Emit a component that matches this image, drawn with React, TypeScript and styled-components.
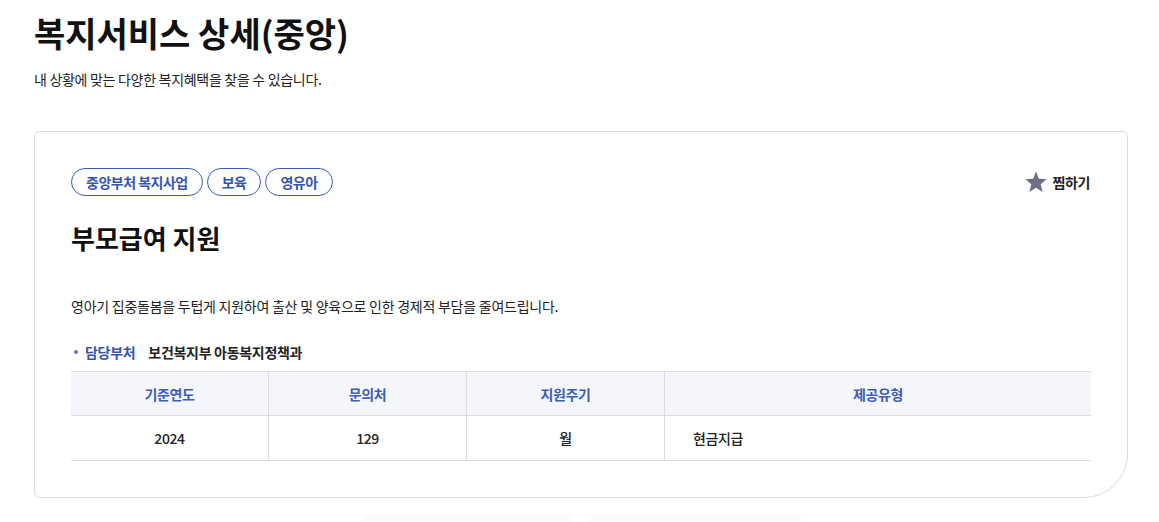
import React from "react";
import styled, { createGlobalStyle } from "styled-components";

const GlobalStyle = createGlobalStyle`
  html, body { margin: 0; padding: 0; background: #fff; }
  body { font-family: "Noto Sans CJK KR", "Noto Sans", sans-serif; color: #111; }
  * { box-sizing: border-box; }
`;

const Page = styled.div`
  padding: 12px 32px 0 34px;
  width: 1159px;
  height: 522px;
  overflow: hidden;
`;

const PageTitle = styled.h1`
  margin: 0;
  font-size: 34px;
  line-height: 42px;
  font-weight: 700;
  letter-spacing: 0;
  color: #111;
`;

const PageDesc = styled.p`
  margin: 15px 0 0;
  font-size: 14px;
  line-height: 20px;
  letter-spacing: -0.3px;
  color: #222;
`;

const Card = styled.section`
  margin-top: 42px;
  width: 1094px;
  border: 1px solid #dcdcdc;
  border-radius: 6px 6px 44px 6px;
  padding: 36px 36px 36px 36px;
`;

const TopRow = styled.div`
  display: flex;
  align-items: center;
  justify-content: space-between;
`;

const Tags = styled.div`
  display: flex;
  gap: 4px;
`;

const Tag = styled.span`
  display: inline-flex;
  align-items: center;
  height: 28px;
  padding: 0 14px;
  border: 1px solid #3d5db8;
  border-radius: 14px;
  font-size: 14px;
  font-weight: 700;
  letter-spacing: -0.5px;
  color: #3656b0;
`;

const Fav = styled.button`
  display: inline-flex;
  align-items: center;
  gap: 5px;
  border: 0;
  background: none;
  padding: 0;
  margin-right: 1px;
  font-family: inherit;
  font-size: 14px;
  font-weight: 700;
  letter-spacing: -0.4px;
  color: #222;
  cursor: pointer;
`;

const ServiceTitle = styled.h2`
  margin: 25px 0 0;
  font-size: 26px;
  line-height: 34px;
  font-weight: 700;
  letter-spacing: 0;
  color: #111;
`;

const ServiceDesc = styled.p`
  margin: 41px 0 0;
  font-size: 14px;
  line-height: 20px;
  letter-spacing: -0.25px;
  color: #222;
`;

const InfoRow = styled.div`
  margin-top: 26px;
  display: flex;
  align-items: center;
  font-size: 14px;
  line-height: 20px;
  letter-spacing: -0.3px;
`;

const InfoLabel = styled.span`
  display: inline-flex;
  align-items: center;
  font-weight: 700;
  color: #3656b0;
  margin-right: 13px;
  &::before {
    content: "";
    width: 4px;
    height: 4px;
    border-radius: 50%;
    background: #5a78c8;
    margin: 0 7px 0 3px;
  }
`;

const InfoValue = styled.span`
  font-weight: 700;
  color: #222;
`;

const Table = styled.div`
  margin-top: 9px;
  display: grid;
  grid-template-columns: 198px 198px 198px 1fr;
  border-top: 1px solid #dcdcdc;
`;

const Cell = styled.div<{ $head?: boolean; $left?: boolean; $last?: boolean }>`
  height: ${(p) => (p.$head ? "44px" : "45px")};
  display: flex;
  align-items: center;
  justify-content: ${(p) => (p.$left ? "flex-start" : "center")};
  padding-left: ${(p) => (p.$left ? "28px" : "0")};
  background: ${(p) => (p.$head ? "#f4f6fb" : "#fff")};
  border-bottom: 1px solid #dcdcdc;
  border-right: ${(p) => (p.$last ? "0" : "1px solid #dcdcdc")};
  font-size: 14px;
  font-weight: ${(p) => (p.$head ? 700 : 500)};
  letter-spacing: -0.4px;
  color: ${(p) => (p.$head ? "#3d5db8" : "#222")};
`;

const BottomBar = styled.div`
  margin-top: 16px;
  display: flex;
  justify-content: center;
  gap: 16px;
`;

const GhostButton = styled.div`
  width: 212px;
  height: 40px;
  border-radius: 6px;
  background: #fcfcfc;
`;

const StarIcon = () => (
  <svg width="24" height="24" viewBox="0 0 24 24" aria-hidden="true">
    <polygon
      points="12,1.5 14.9,8.8 22.7,9.3 16.7,14.3 18.6,22 12,17.8 5.4,22 7.3,14.3 1.3,9.3 9.1,8.8"
      fill="#6c6f86"
    />
  </svg>
);

export default function App() {
  const heads = ["기준연도", "문의처", "지원주기", "제공유형"];
  return (
    <>
      <GlobalStyle />
      <Page>
        <PageTitle>복지서비스 상세(중앙)</PageTitle>
        <PageDesc>내 상황에 맞는 다양한 복지혜택을 찾을 수 있습니다.</PageDesc>
        <Card>
          <TopRow>
            <Tags>
              <Tag>중앙부처 복지사업</Tag>
              <Tag>보육</Tag>
              <Tag>영유아</Tag>
            </Tags>
            <Fav>
              <StarIcon />
              찜하기
            </Fav>
          </TopRow>
          <ServiceTitle>부모급여 지원</ServiceTitle>
          <ServiceDesc>
            영아기 집중돌봄을 두텁게 지원하여 출산 및 양육으로 인한 경제적 부담을 줄여드립니다.
          </ServiceDesc>
          <InfoRow>
            <InfoLabel>담당부처</InfoLabel>
            <InfoValue>보건복지부 아동복지정책과</InfoValue>
          </InfoRow>
          <Table>
            {heads.map((h, i) => (
              <Cell key={h} $head $last={i === 3}>
                {h}
              </Cell>
            ))}
            <Cell>2024</Cell>
            <Cell>129</Cell>
            <Cell>월</Cell>
            <Cell $left $last>
              현금지급
            </Cell>
          </Table>
        </Card>
        <BottomBar>
          <GhostButton />
          <GhostButton />
        </BottomBar>
      </Page>
    </>
  );
}
